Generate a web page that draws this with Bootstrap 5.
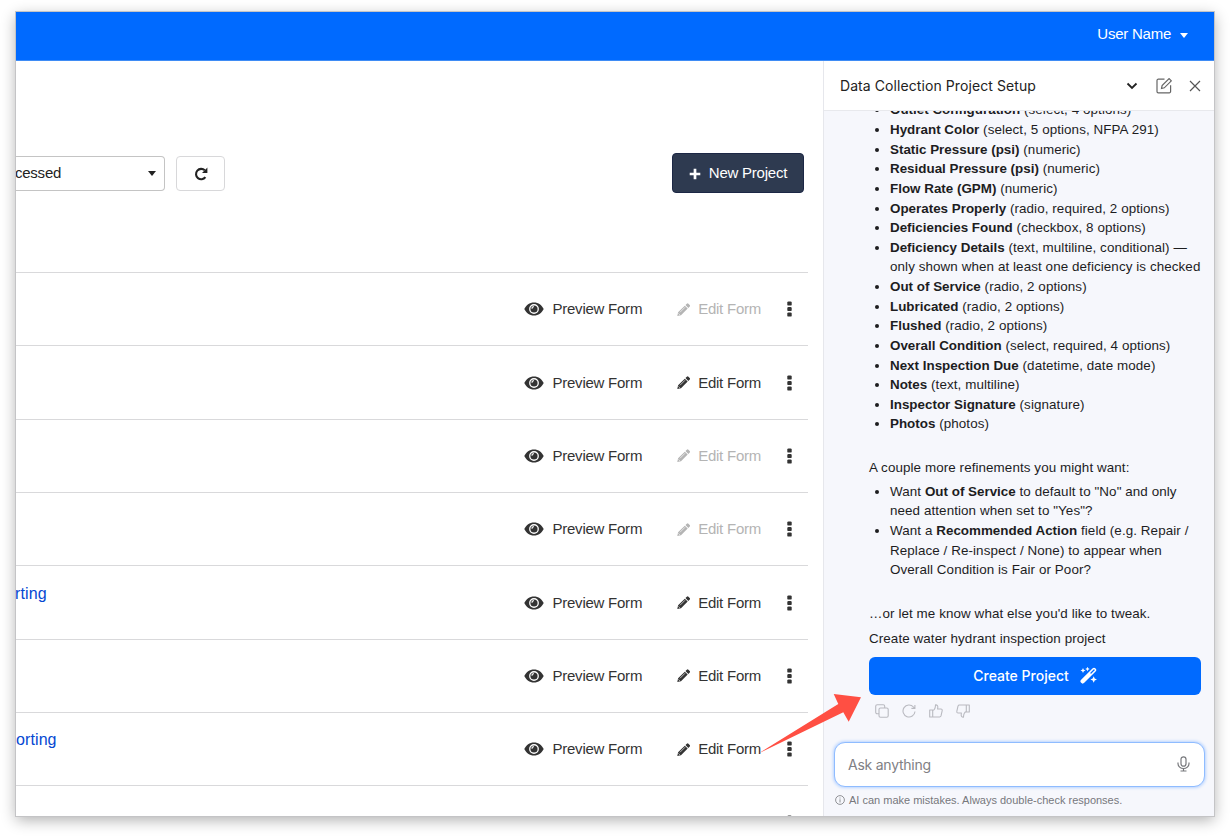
<!DOCTYPE html>
<html lang="en">
<head>
<meta charset="utf-8">
<meta name="viewport" content="width=device-width, initial-scale=1">
<title>Projects</title>
<link href="https://cdn.jsdelivr.net/npm/bootstrap@5.3.0/dist/css/bootstrap.min.css" rel="stylesheet">
<style>
body{font-family:"Liberation Sans",Arial,sans-serif;font-size:15px;letter-spacing:-.24px;color:#222;background:#fff;height:836px;overflow:hidden}
.app-window{width:1198px;height:804px;margin:12px 0 0 16px;overflow:hidden;background:#fff;box-shadow:0 0 0 1px #c4c4c6,0 4px 14px rgba(0,0,0,.32)}
.topbar{height:49px;background:#006aff;color:#fff;padding:0 26px 3px 0;border-bottom:1px solid #3f8cf5;flex:none}
.tri{width:0;height:0;border:4.5px solid transparent;border-bottom:0;border-top:5px solid currentColor}
.main-pane{padding-right:15px;min-width:0}
.toolbar{height:211px;padding:92px 4px 0 0}
.sort-box{width:149px;height:35px;margin-top:3px;border:1px solid #c4c4c4;border-left:0;border-radius:0 4px 4px 0;padding-right:8px}
.sort-box span:first-child{margin-left:-1px}
.refresh{width:49px;height:35px;margin:3px 0 0 11px;border:1px solid #d8d8da;border-radius:4px;padding:0}
.new-btn,.new-btn:hover{width:132px;height:40px;background:#2e3a50;border:1px solid #1c2745;border-radius:4px;color:#fff;font-size:15px;letter-spacing:-.22px;padding:1px 0 0}
.proj{height:73.35px;border-top:1px solid #d9d9db;color:#333;padding-right:16px;flex:none}
.proj .lnk{color:#0548d2;font-size:16px;letter-spacing:.1px;margin-bottom:18px;text-decoration:none}
.act{display:flex;align-items:center}
.act span{padding-top:1px}
.off{color:#b4b4b4}
.side{width:391px;border-left:1px solid #e6e7ec;background:#f6f7fc;flex:none}
.side-head{height:50px;background:#fff;border-bottom:1px solid #e8e9ed;padding:0 13px 0 16px;font-family:Inter,sans-serif;font-size:14px;letter-spacing:.08px;flex:none}
.msgs{font-size:13.4px;line-height:19.63px;letter-spacing:.09px;padding:0 13px 0 45px;color:#1d1d1f;min-height:0;overflow:hidden}
.msgs b{letter-spacing:0}
.msgs ul{padding-left:21px;margin:0}
.msgs p{margin:0}
.create,.create:hover{height:37.5px;background:#006aff;color:#fff;border:0;border-radius:6px;font:500 14px Inter,sans-serif;letter-spacing:0;margin-top:8px;flex:none;padding:0}
.reacts{color:#b9bac0;height:14px;margin:9px 0 24.5px 6px;gap:13px;flex:none}
.ask{height:45px;margin:0 9px 0 10px;border:1px solid #8fbcff;border-radius:11px;background:#fff;box-shadow:0 0 3px 1px #b9d4ff;padding:0 14px 1px 13px;font-family:Inter,sans-serif;font-size:14px;color:#808084;flex:none}
.note{height:29px;font-size:11px;letter-spacing:0;color:#77787c;padding:0 0 3px 11px;flex:none}
.pointer{position:absolute;left:750px;top:685px}
svg{display:block;flex:none}
</style>
</head>
<body>
<svg width="0" height="0" class="position-absolute">
<symbol id="eye" viewBox="0 0 20 14"><path fill-rule="evenodd" fill="currentColor" d="M.3 7C2 3.200 5.600.5 10 .5S18 3.200 19.700 7C18 10.800 14.400 13.500 10 13.500S2 10.800.3 7ZM10 2.100a4.900 4.900 0 1 0 0 9.800 4.900 4.900 0 0 0 0-9.800Z"/><circle cx="10" cy="7" r="3.600" fill="currentColor"/><path d="M7.900 6.600a2 2 0 0 1 2-1.900" fill="none" stroke="#fff" stroke-width="1.300"/></symbol>
<symbol id="pen" viewBox="0 0 14 14"><path fill="currentColor" d="m9.100 2.200 1.500-1.500a1.200 1.200 0 0 1 1.700 0l1.400 1.400a1.200 1.200 0 0 1 0 1.700l-1.500 1.500ZM8.400 2.900l3.100 3.100L4.300 13.200.3 14l.9-4Z"/><path d="m3.200 10 5.400-5.400M1.600 11.200l1.500 1.600" stroke="#fff" stroke-width=".7" fill="none"/></symbol>
<symbol id="dots" viewBox="0 0 5 16"><g fill="currentColor"><rect x=".3" y=".4" width="4.400" height="4.200" rx="1.200"/><rect x=".3" y="5.900" width="4.400" height="4.200" rx="1.200"/><rect x=".3" y="11.400" width="4.400" height="4.200" rx="1.200"/></g></symbol>
</svg>
<div class="app-window d-flex flex-column">
  <nav class="topbar d-flex align-items-center justify-content-end"><span>User Name</span><span class="tri" style="margin:2px 0 0 9px"></span></nav>
  <div class="d-flex flex-grow-1" style="min-height:0">
    <main class="main-pane flex-grow-1 d-flex flex-column overflow-hidden">
      <div class="toolbar d-flex align-items-start flex-shrink-0">
        <div class="sort-box d-flex align-items-center justify-content-between"><span>cessed</span><span class="tri"></span></div>
        <button class="btn refresh d-flex align-items-center justify-content-center"><svg width="14" height="14" viewBox="0 0 14 14"><path d="M11.400 10.200A5.200 5.200 0 1 1 10.800 3.300" fill="none" stroke="#222" stroke-width="2.100"/><path d="M13.400.5v5.400H8Z" fill="#222"/></svg></button>
        <button class="btn new-btn ms-auto d-flex align-items-center justify-content-center"><svg width="12" height="12" viewBox="0 0 12 12" class="me-2"><path d="M6 .7v10.600M.7 6h10.600" stroke="#fff" stroke-width="2.700"/></svg><span>New Project</span></button>
      </div>
      <div id="rows"></div>
    </main>
    <aside class="side d-flex flex-column">
      <header class="side-head d-flex align-items-center"><span>Data Collection Project Setup</span>
        <svg class="ms-auto" width="12" height="8" viewBox="0 0 12 8"><path d="M1.500 1.500 6 6l4.500-4.500" fill="none" stroke="#222" stroke-width="1.800"/></svg>
        <svg style="margin:0 17px 0 18px" width="16" height="16" viewBox="0 0 16 16" fill="none" stroke="#666" stroke-width="1.200"><path d="M8.500 1.200H2.300a1.300 1.300 0 0 0-1.300 1.300v11a1.300 1.300 0 0 0 1.300 1.300h11a1.300 1.300 0 0 0 1.300-1.300V7.300"/><path d="m5.500 10.500.6-2.900 7-7 2.200 2.200-7 7Z"/></svg>
        <svg width="12" height="12" viewBox="0 0 12 12"><path d="m1 1 10 10M11 1 1 11" stroke="#555" stroke-width="1.200"/></svg>
      </header>
      <section class="msgs d-flex flex-column justify-content-end flex-grow-1">
        <ul>
          <li><b>Outlet Configuration</b> (select, 4 options)</li>
          <li><b>Hydrant Color</b> (select, 5 options, NFPA 291)</li>
          <li><b>Static Pressure (psi)</b> (numeric)</li>
          <li><b>Residual Pressure (psi)</b> (numeric)</li>
          <li><b>Flow Rate (GPM)</b> (numeric)</li>
          <li><b>Operates Properly</b> (radio, required, 2 options)</li>
          <li><b>Deficiencies Found</b> (checkbox, 8 options)</li>
          <li><b>Deficiency Details</b> (text, multiline, conditional) —<br><span class="text-nowrap">only shown when at least one deficiency is checked</span></li>
          <li><b>Out of Service</b> (radio, 2 options)</li>
          <li><b>Lubricated</b> (radio, 2 options)</li>
          <li><b>Flushed</b> (radio, 2 options)</li>
          <li><b>Overall Condition</b> (select, required, 4 options)</li>
          <li><b>Next Inspection Due</b> (datetime, date mode)</li>
          <li><b>Notes</b> (text, multiline)</li>
          <li><b>Inspector Signature</b> (signature)</li>
          <li><b>Photos</b> (photos)</li>
        </ul>
        <p style="margin-top:24px">A couple more refinements you might want:</p>
        <ul class="mt-1">
          <li>Want <b>Out of Service</b> to default to "No" and only<br>need attention when set to "Yes"?</li>
          <li>Want a <b>Recommended Action</b> field (e.g. Repair /<br>Replace / Re-inspect / None) to appear when<br>Overall Condition is Fair or Poor?</li>
        </ul>
        <p class="mt-4">…or let me know what else you'd like to tweak.</p>
        <p style="margin-top:6px">Create water hydrant inspection project</p>
        <button class="btn create d-flex align-items-center justify-content-center"><span>Create Project</span>
          <svg style="margin-left:11px" width="17" height="17" viewBox="0 0 17 17"><path d="M2.700 14.300 14 3" stroke="#fff" stroke-width="4.400" stroke-linecap="round"/><path d="m11 6 3-3" stroke="#006aff" stroke-width="1.300" stroke-linecap="round"/><path fill="#fff" d="m3 1 .8 1.700 1.700.8-1.700.8L3 6l-.8-1.700L.5 3.500l1.700-.8ZM7.500-.2l.7 1.500 1.500.7-1.500.7-.7 1.500-.7-1.500L5.300 2l1.500-.7ZM13.700 9.200l1 2.300 2.300 1-2.300 1-1 2.300-1-2.300-2.300-1 2.300-1Z"/></svg></button>
        <div class="reacts d-flex">
          <svg width="14" height="14" viewBox="0 0 14 14" fill="none" stroke="currentColor" stroke-width="1.100"><rect x="4" y="4" width="9.200" height="9.200" rx="1.500"/><path d="M4 9.700H2.200A1.500 1.500 0 0 1 .7 8.200v-6A1.500 1.500 0 0 1 2.200.7h6a1.500 1.500 0 0 1 1.500 1.500V4"/></svg>
          <svg width="14" height="14" viewBox="0 0 14 14" fill="none" stroke="currentColor" stroke-width="1.100"><path d="M13 7.500A6 6 0 1 1 11.500 3l1 1.200M12.900.9v3.500H9.400"/></svg>
          <svg width="14" height="14" viewBox="0 0 14 14" fill="none" stroke="currentColor" stroke-width="1.100" stroke-linejoin="round"><path id="thumb" d="M.7 6h3v7h-3ZM3.700 6.500C5.500 5.800 6.500 4 6.500.9c1.800-.2 2.400 1.100 2.300 2.300L8.600 5h3.300c1 0 1.500.8 1.300 1.600l-1.200 5.300c-.2.700-.7 1.100-1.400 1.100H3.700"/></svg>
          <svg width="14" height="14" viewBox="0 0 14 14" fill="none" stroke="currentColor" stroke-width="1.100" stroke-linejoin="round"><use href="#thumb" transform="rotate(180 7 7)"/></svg>
        </div>
      </section>
      <div class="ask d-flex align-items-center justify-content-between"><span>Ask anything</span>
        <svg width="13" height="16" viewBox="0 0 13 16" fill="none" stroke="#77787c" stroke-width="1.200"><rect x="4" y=".8" width="5" height="9.400" rx="2.500"/><path d="M1 6.500v1.300a5.500 4.700 0 0 0 11 0V6.500M6.500 12.500V15M3.500 15h6"/></svg></div>
      <div class="note d-flex align-items-center"><svg width="10" height="10" viewBox="0 0 10 10" class="me-1" fill="none" stroke="currentColor" stroke-width=".8"><circle cx="5" cy="5" r="4.400"/><path d="M5 4.300v3.200M5 2.500v1"/></svg><span>AI can make mistakes. Always double-check responses.</span></div>
    </aside>
  </div>
</div>
<svg class="pointer" width="120" height="75" viewBox="750 685 120 75"><path d="M758.500 753.500 838.300 704 833.700 694 861 697.300 848.700 721.700 843.300 712.300Z" fill="#ff4f43"/></svg>
<script>
const rows=[[0],[1],[0],[0],[1,"rting",-1],[1],[1,"orting",0],[1,"",0,true]];
document.getElementById('rows').innerHTML=rows.map(([on,name,shift,peek])=>`<div class="proj d-flex align-items-center">
${name?`<a class="lnk" style="margin-left:${shift}px">${name}</a>`:''}
<div class="act ms-auto"><svg width="20" height="14" style="margin-right:9px"><use href="#eye"/></svg>${peek?'<span style="width:89.6px"></span>':'<span>Preview Form</span>'}</div>
<div class="act ${on?'':'off'}" style="margin-left:35px"><svg width="13" height="13" style="margin-right:8px"><use href="#pen"/></svg>${peek?'<span style="width:62.8px"></span>':'<span>Edit Form</span>'}</div>
<svg style="margin-left:26px" width="5" height="16"><use href="#dots"/></svg></div>`).join('');
</script>
<script src="https://cdn.jsdelivr.net/npm/bootstrap@5.3.0/dist/js/bootstrap.bundle.min.js"></script>
</body>
</html>
